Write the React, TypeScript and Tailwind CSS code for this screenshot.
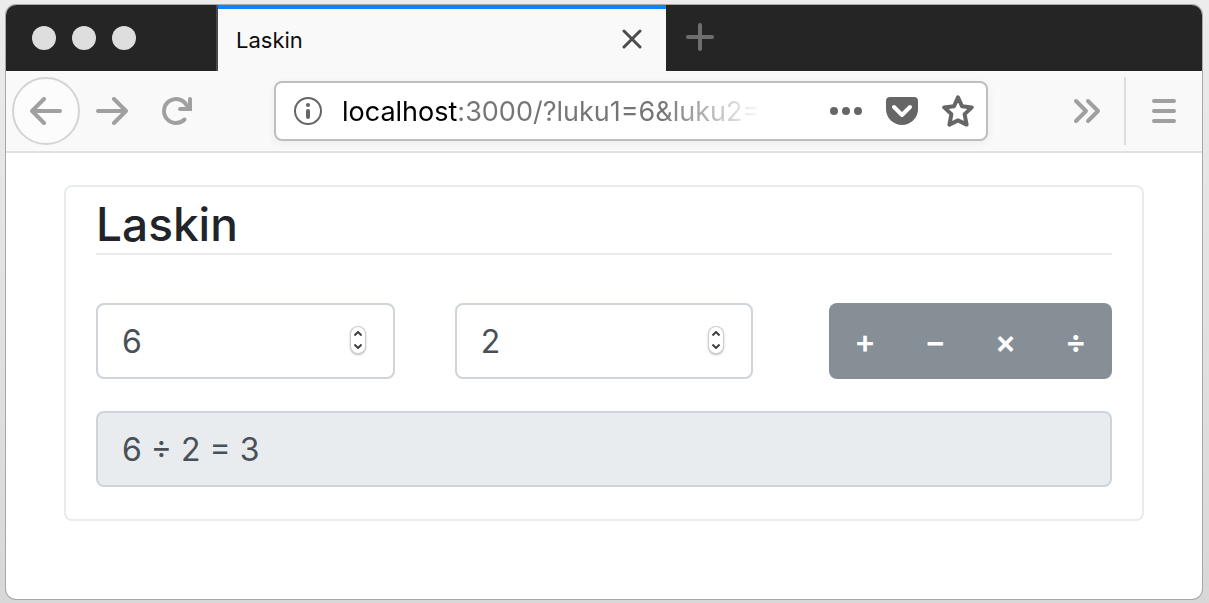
import { useState } from "react";

const iconButton = "flex h-[68px] items-center justify-center text-[#a0a0a0]";

function BackIcon() {
  return (
    <svg width="32" height="28" viewBox="0 0 32 28" fill="none" stroke="currentColor" strokeWidth="4" strokeLinecap="round" strokeLinejoin="round" aria-hidden="true">
      <path d="M30 14H3M14 2L2 14l12 12" />
    </svg>
  );
}

function ForwardIcon() {
  return (
    <svg width="32" height="28" viewBox="0 0 32 28" fill="none" stroke="currentColor" strokeWidth="4" strokeLinecap="round" strokeLinejoin="round" aria-hidden="true">
      <path d="M2 14h27M18 2l12 12-12 12" />
    </svg>
  );
}

function ReloadIcon() {
  return (
    <svg width="32" height="32" viewBox="0 0 32 32" fill="none" stroke="currentColor" strokeWidth="4" strokeLinecap="round" strokeLinejoin="round" aria-hidden="true">
      <path d="M24.5 24.5A12 12 0 1 1 26.4 10" />
      <path d="M30 4v10H20" strokeLinejoin="miter" />
      <path d="M30 8v6h-6z" fill="currentColor" stroke="none" />
    </svg>
  );
}

function InfoIcon() {
  return (
    <svg width="28" height="28" viewBox="0 0 28 28" fill="none" stroke="#666" aria-hidden="true" className="shrink-0">
      <circle cx="14" cy="14" r="13" strokeWidth="2" />
      <circle cx="14" cy="8" r="2.1" fill="#666" stroke="none" />
      <path d="M14 14v6" strokeWidth="4" strokeLinecap="round" />
    </svg>
  );
}

function PocketIcon() {
  return (
    <svg width="32" height="28" viewBox="0 0 32 28" fill="none" aria-hidden="true">
      <path d="M4 0h24a4 4 0 0 1 4 4v8a16 16 0 0 1-32 0V4a4 4 0 0 1 4-4z" fill="#666" />
      <path d="M8 10l8 8 8-8" stroke="#fff" strokeWidth="4" strokeLinecap="round" strokeLinejoin="round" />
    </svg>
  );
}

function StarIcon() {
  return (
    <svg width="32" height="32" viewBox="0 0 32 32" fill="none" stroke="#666" strokeWidth="4" strokeLinejoin="round" aria-hidden="true">
      <path d="M16 2.4L20 11.3L29.8 12.4L22.6 19.1L24.6 29.6L16 25.4L7.4 29.6L9.4 19.1L2.2 12.4L12 11.3Z" />
    </svg>
  );
}

function NumberField({ label, value, onChange }: { label: string; value: number; onChange: (n: number) => void }) {
  return (
    <div className="relative">
      <input
        type="number"
        aria-label={label}
        value={value}
        onChange={(e) => onChange(Number(e.target.value))}
        className="h-[76px] w-full appearance-none rounded-lg border-2 border-[#ced4da] bg-white px-6 text-[32px] text-[#495057] [appearance:textfield]"
      />
      <div className="absolute inset-y-0 right-[30px] flex items-center pb-0.5">
        <div className="flex h-[26px] w-3.5 flex-col rounded-full bg-white text-[#404040] shadow-[0_0_0_1px_#cfcfcf,0_1px_2px_1px_#bbb]">
          <button type="button" aria-label={`${label} +1`} onClick={() => onChange(value + 1)} className="flex flex-1 items-center justify-center">
            <svg width="8" height="5" viewBox="0 0 8 5" fill="none" stroke="currentColor" strokeWidth="2" aria-hidden="true">
              <path d="M0.5 4.5L4 1L7.5 4.5" />
            </svg>
          </button>
          <button type="button" aria-label={`${label} −1`} onClick={() => onChange(value - 1)} className="flex flex-1 items-center justify-center">
            <svg width="8" height="5" viewBox="0 0 8 5" fill="none" stroke="currentColor" strokeWidth="2" aria-hidden="true">
              <path d="M0.5 0.5L4 4L7.5 0.5" />
            </svg>
          </button>
        </div>
      </div>
    </div>
  );
}

const operations: Record<string, (a: number, b: number) => number> = {
  "+": (a, b) => a + b,
  "−": (a, b) => a - b,
  "×": (a, b) => a * b,
  "÷": (a, b) => a / b,
};

function Calculator() {
  const [first, setFirst] = useState(6);
  const [second, setSecond] = useState(2);
  const [result, setResult] = useState("6 ÷ 2 = 3");

  return (
    <section className="rounded-lg border-2 border-[#e9ecef] px-[30px] pt-2 pb-8">
      <h1 className="border-b-2 border-[#e9ecef] text-[46px] leading-[58px] font-medium text-[#212529]">Laskin</h1>
      <div className="mt-12 grid grid-cols-3 gap-[60px]">
        <NumberField label="Luku 1" value={first} onChange={setFirst} />
        <NumberField label="Luku 2" value={second} onChange={setSecond} />
        <div className="flex justify-end">
          <div className="flex h-[76px] w-[283px] rounded-lg bg-[#868e96]">
            {Object.keys(operations).map((op) => (
              <button
                key={op}
                type="button"
                onClick={() => setResult(`${first} ${op} ${second} = ${operations[op](first, second)}`)}
                className="-ml-0.5 flex-1 pt-0.5 text-[32px] font-semibold text-white first:ml-0"
              >
                {op}
              </button>
            ))}
          </div>
        </div>
      </div>
      <input
        aria-label="Tulos"
        readOnly
        value={result}
        className="mt-8 block h-[76px] w-full rounded-lg border-2 border-[#ced4da] bg-[#e9ecef] px-6 text-[32px] text-[#495057]"
      />
    </section>
  );
}

function TabStrip() {
  return (
    <div className="flex h-[66px] bg-[#252525]">
      <div className="flex w-[212px] items-center gap-4 border-r-2 border-[#4a4a4a] px-[26px]">
        <span className="size-6 rounded-full bg-[#dedede]" />
        <span className="size-6 rounded-full bg-[#dedede]" />
        <span className="size-6 rounded-full bg-[#dedede]" />
      </div>
      <div className="flex w-[448px] items-center justify-between border-t-4 border-[#0a84ff] bg-[#f9f9fa] pr-6 pl-[18px]">
        <span className="text-[22px] text-[#0c0c0d]">Laskin</span>
        <button type="button" aria-label="Sulje välilehti" className="pb-0.5">
          <svg width="20" height="20" viewBox="0 0 20 20" stroke="#4c4c4c" strokeWidth="3" strokeLinecap="round" aria-hidden="true">
            <path d="M2 2l16 16M18 2L2 18" />
          </svg>
        </button>
      </div>
      <button type="button" aria-label="Uusi välilehti" className="flex w-[68px] items-center justify-center pb-0.5">
        <svg width="28" height="28" viewBox="0 0 28 28" stroke="#6e6e6e" strokeWidth="4" strokeLinecap="round" aria-hidden="true">
          <path d="M14 2v24M2 14h24" />
        </svg>
      </button>
    </div>
  );
}

function Toolbar() {
  return (
    <div className="flex items-center border-b-2 border-[#e1e1e2] bg-[#f9f9fa] py-1.5 pl-1.5">
      <button type="button" aria-label="Takaisin" className={`${iconButton} w-[68px] rounded-full border-2 border-[#d4d4d4] bg-[#fcfcfc]`}>
        <BackIcon />
      </button>
      <button type="button" aria-label="Eteenpäin" className={`${iconButton} w-16`}>
        <ForwardIcon />
      </button>
      <button type="button" aria-label="Lataa uudelleen" className={`${iconButton} w-16`}>
        <ReloadIcon />
      </button>
      <div className="mx-[66px] flex h-[60px] min-w-0 flex-1 items-center rounded-lg border-2 border-[#bebebe] bg-white pr-3 pl-[18px] shadow-[0_2px_8px_rgba(0,0,0,0.06)]">
        <InfoIcon />
        <input
          aria-label="Osoite"
          defaultValue="localhost:3000/?luku1=6&luku2="
          className="ml-5 min-w-0 flex-1 bg-[linear-gradient(to_right,#000_115px,#757575_115px,#757575_320px,transparent_420px)] bg-clip-text pt-0.5 text-[27px] text-transparent caret-black outline-none"
        />
        <div className="ml-16 flex items-center gap-6">
          <button type="button" aria-label="Sivun toiminnot">
            <svg width="32" height="8" viewBox="0 0 32 8" fill="#666" aria-hidden="true">
              <circle cx="4" cy="4" r="4" />
              <circle cx="16" cy="4" r="4" />
              <circle cx="28" cy="4" r="4" />
            </svg>
          </button>
          <button type="button" aria-label="Tallenna Pocketiin">
            <PocketIcon />
          </button>
          <button type="button" aria-label="Lisää kirjanmerkki">
            <StarIcon />
          </button>
        </div>
      </div>
      <button type="button" aria-label="Lisää työkaluja" className={`${iconButton} w-[66px]`}>
        <svg width="28" height="26" viewBox="0 0 28 26" fill="none" stroke="currentColor" strokeWidth="4" strokeLinecap="round" strokeLinejoin="round" aria-hidden="true">
          <path d="M3 3l10 10L3 23M15 3l10 10-10 10" />
        </svg>
      </button>
      <span className="ml-1 h-[68px] w-0.5 bg-[#dedede]" />
      <button type="button" aria-label="Valikko" className={`${iconButton} w-[76px]`}>
        <svg width="24" height="24" viewBox="0 0 24 24" stroke="currentColor" strokeWidth="4" strokeLinecap="round" aria-hidden="true">
          <path d="M2 2h20M2 12h20M2 22h20" />
        </svg>
      </button>
    </div>
  );
}

export default function App() {
  return (
    <div className="flex min-h-screen flex-col bg-linear-to-b from-[#ececec] to-[#d8d8d8] pt-[5px] pr-[7px] pb-1 pl-1.5 font-[Inter,sans-serif]">
      <div className="flex flex-1 flex-col overflow-hidden rounded-[10px] bg-white shadow-[0_0_0_1px_#a8a8a8]">
        <TabStrip />
        <Toolbar />
        <main className="px-[58px] py-8">
          <Calculator />
        </main>
      </div>
    </div>
  );
}
